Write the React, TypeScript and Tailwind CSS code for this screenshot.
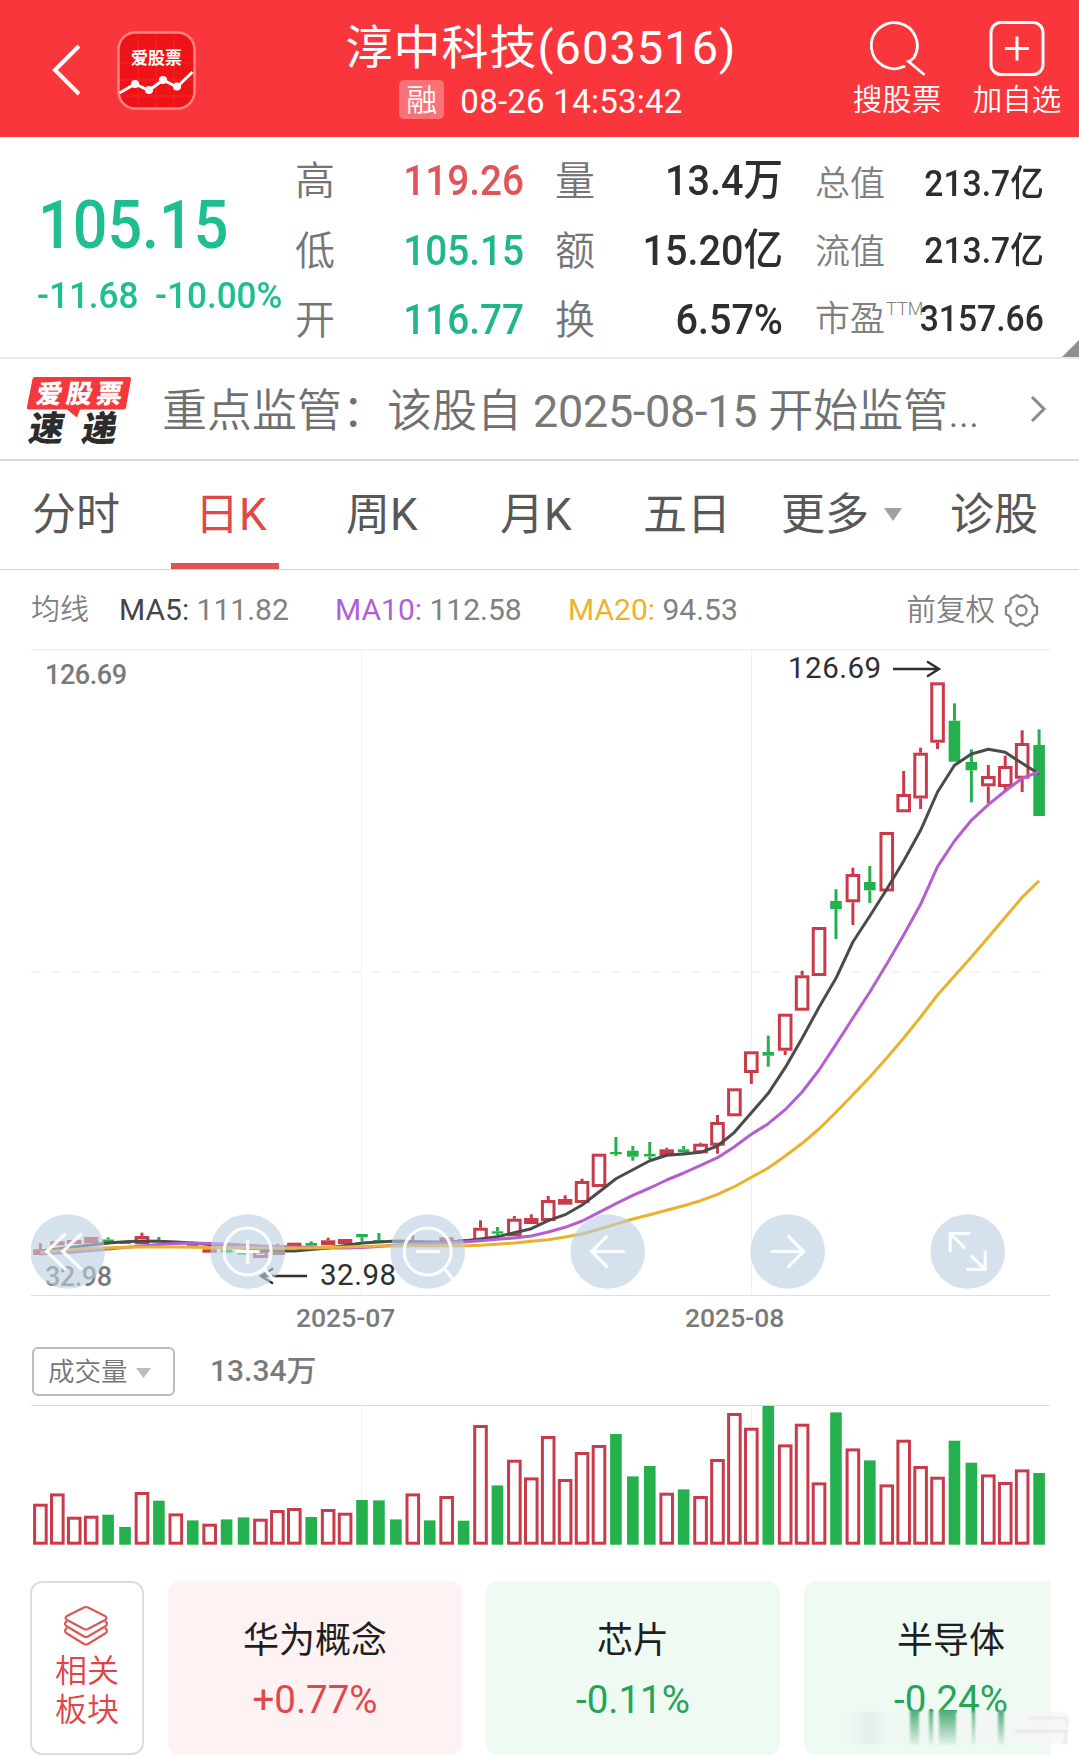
import React from 'react'

const RED = '#c93a4b'
const GREEN = '#24b14d'

const FIRST_X = 40.4
const STEP = 16.927

// [up, high, bodyTop, bodyBottom, low]
type Candle = [number, number, number, number, number]

const candles: Candle[] = [
  [1, 1243.3, 1249.3, 1255, 1255],
  [1, 1241.3, 1241.3, 1245.3, 1245.3],
  [1, 1240, 1240, 1244, 1244],
  [1, 1237, 1237, 1243.3, 1243.3],
  [0, 1237.3, 1239.5, 1243, 1244.5],
  [0, 1242, 1242, 1244, 1244],
  [1, 1232.7, 1236, 1244.3, 1244.3],
  [0, 1237, 1240, 1242, 1242],
  [1, 1241.3, 1241.3, 1243.5, 1243.5],
  [0, 1244, 1244, 1247, 1247],
  [1, 1249.3, 1249.3, 1252.7, 1252.7],
  [0, 1249.5, 1249.5, 1252.7, 1252.7],
  [0, 1252, 1252, 1254.5, 1254.5],
  [1, 1249.3, 1250.5, 1258, 1258],
  [1, 1244, 1249.5, 1255, 1255],
  [1, 1242.7, 1242.7, 1246.5, 1246.5],
  [0, 1241.3, 1243, 1245.7, 1245.7],
  [1, 1237.7, 1240.3, 1245.3, 1245.3],
  [1, 1239, 1239, 1244, 1244],
  [0, 1234, 1234, 1237.3, 1241.3],
  [0, 1233, 1240, 1242, 1242],
  [0, 1241, 1241, 1243, 1243],
  [1, 1235, 1241, 1244.5, 1244.5],
  [0, 1241, 1241, 1243, 1243],
  [1, 1237, 1237.3, 1244, 1244],
  [0, 1239, 1239, 1241, 1241],
  [1, 1220.3, 1227.7, 1241, 1241],
  [0, 1227, 1231.3, 1233.6, 1235.3],
  [1, 1216, 1218.7, 1236.3, 1236.3],
  [1, 1214.3, 1218, 1224, 1224],
  [1, 1196, 1200, 1221, 1221],
  [1, 1195.3, 1199, 1204.7, 1204.7],
  [1, 1178.7, 1181, 1203, 1203],
  [1, 1153.7, 1153.7, 1187, 1187],
  [0, 1137, 1152, 1154.3, 1156],
  [0, 1146, 1150.7, 1156.7, 1160.7],
  [0, 1142, 1154, 1156.5, 1159.3],
  [1, 1147.7, 1149.3, 1156, 1156],
  [0, 1146, 1149.3, 1152.3, 1153.7],
  [1, 1142.7, 1143.7, 1153.3, 1153.3],
  [1, 1115, 1122, 1145.7, 1153.7],
  [1, 1088.3, 1088.3, 1116.3, 1116.3],
  [1, 1051.3, 1051.3, 1073, 1084],
  [0, 1035.7, 1052, 1055.7, 1066.7],
  [1, 1013.7, 1013.7, 1050.7, 1055],
  [1, 970.7, 975.3, 1010.7, 1010.7],
  [1, 927, 927, 976, 976],
  [0, 889.3, 901, 909, 939],
  [1, 867.7, 874, 902.3, 925],
  [0, 866, 882, 890.3, 903],
  [1, 832, 832, 891.5, 891.5],
  [1, 771, 794, 812.3, 812.3],
  [1, 747.7, 752.7, 798.5, 809],
  [1, 682.3, 682.3, 742.7, 749],
  [0, 703.3, 720.7, 761.7, 761.7],
  [0, 749.3, 762, 770.3, 802.3],
  [1, 765, 776, 786.3, 803.3],
  [1, 755.7, 766, 787, 791.7],
  [1, 730.3, 743, 778.7, 792],
  [0, 729.3, 745, 816, 816],
]

const ma5 = [
  1251, 1249, 1247, 1245, 1243, 1241.7, 1241, 1241.3, 1242, 1243, 1244.5, 1246, 1248, 1250, 1251, 1251, 1249.5, 1248,
  1245.5, 1243, 1242, 1241, 1241.5, 1242, 1242, 1241, 1239, 1236.7, 1232.7, 1228.7, 1220.7, 1214.7, 1205, 1192, 1178.7,
  1169.7, 1160.7, 1155.3, 1154, 1152.3, 1146, 1132.3, 1112.7, 1093.3, 1067.7, 1038.3, 1007.3, 978.3, 942, 916, 889.3,
  861, 830.3, 792, 765.3, 754, 749.3, 752.3, 763.3, 774,
]

const ma10 = [
  1254, 1253, 1252, 1250.5, 1249, 1247.5, 1246, 1244.5, 1243.5, 1243, 1243.5, 1244, 1245, 1246, 1246.5, 1247, 1247.5,
  1248, 1248, 1247.5, 1246.5, 1245, 1244, 1243.5, 1243, 1242, 1240.7, 1239.3, 1238, 1236, 1232, 1227.3, 1221, 1212.3,
  1203.7, 1195.3, 1188, 1180, 1173, 1165.3, 1157.7, 1146.7, 1134.3, 1123.7, 1109.7, 1092, 1070, 1044.3, 1018, 992, 964,
  935, 904.3, 866.7, 841, 820.3, 804.7, 791, 778.3, 771.7,
]

const ma20 = [
  1252, 1250.7, 1249.5, 1248.5, 1247.7, 1247.3, 1247, 1247, 1247, 1247.3, 1247.5, 1247.5, 1247.5, 1248, 1248, 1248,
  1248, 1247.5, 1247, 1246.5, 1246, 1246, 1245.7, 1245.7, 1245.7, 1245.7, 1245.3, 1244.3, 1243, 1241.3, 1239.7, 1237,
  1234, 1229.3, 1224, 1219, 1214.7, 1210.3, 1205.7, 1200.7, 1194.3, 1186.7, 1177.3, 1168, 1156, 1143.3, 1129, 1112.3,
  1094.7, 1077, 1058, 1038, 1017, 995, 976, 957, 937.3, 917.3, 897.3, 880.7,
]

// [up, bar height]
const volumes: [number, number][] = [
  [1, 41], [1, 51.3], [1, 28], [1, 29], [0, 30], [0, 17.7], [1, 52.7], [0, 44], [1, 31.3], [0, 24.3],
  [1, 21], [0, 25.3], [0, 27.3], [1, 26], [1, 34.7], [1, 36.7], [0, 27.7], [1, 35.7], [1, 32], [0, 44.7],
  [0, 44.3], [0, 25.3], [1, 51.3], [0, 24.3], [1, 48.7], [0, 24], [1, 119.7], [0, 59.3], [1, 85], [1, 67.3],
  [1, 108.7], [1, 65.7], [1, 92.7], [1, 99.7], [0, 110.7], [0, 68.3], [0, 78.7], [1, 52], [0, 55.3], [1, 48.7],
  [1, 85.7], [1, 131.7], [1, 117], [0, 138.7], [1, 100.3], [1, 121], [1, 62.3], [0, 132.3], [1, 96.3], [0, 84.3],
  [1, 60.3], [1, 105], [1, 78.7], [1, 68], [0, 104], [0, 82], [1, 70.3], [1, 62.7], [1, 75.3], [0, 71.7],
]

const quoteRows = [
  { a: '高', av: '119.26', up: true, b: '量', bv: '13.4万' },
  { a: '低', av: '105.15', up: false, b: '额', bv: '15.20亿' },
  { a: '开', av: '116.77', up: false, b: '换', bv: '6.57%' },
]

const valueRows = [
  { label: '总值', value: '213.7亿' },
  { label: '流值', value: '213.7亿' },
  { label: '市盈', sup: 'TTM', value: '3157.66' },
]

const sectors = [
  { name: '华为概念', change: '+0.77%', up: true },
  { name: '芯片', change: '-0.11%', up: false },
  { name: '半导体', change: '-0.24%', up: false },
]

const linePoints = (values: number[]) => values.map((y, i) => `${FIRST_X + STEP * i},${y}`).join(' ')

const Header: React.FC = () => (
  <header className="flex h-[137px] items-start bg-[#f9363c] text-white">
    <svg className="mt-[42px] ml-[49px]" width="32" height="56" fill="none" stroke="currentColor" strokeWidth="4">
      <path d="M30 4 6 28l24 24" />
    </svg>
    <svg className="mt-[31px] ml-[36px]" width="79" height="79">
      <rect x="1.5" y="1.5" width="76" height="76" rx="17" fill="#ee1316" stroke="#ff8585" strokeWidth="2.5" />
      <path d="M21 3v73M39 3v73M57 3v73M3 32h73M3 49h73M3 65h73" stroke="#ff4a4a" strokeWidth="1" opacity=".35" />
      <text x="39.500" y="32.500" textAnchor="middle" fontSize="17" fontWeight="700" fill="#fff">爱股票</text>
      <path d="M2.500 62 18 53l14 6.500 14-10.500 14 7L75.500 41" fill="none" stroke="#fff" strokeWidth="3" />
      <g fill="#fff">
        <circle cx="18" cy="53" r="4" />
        <circle cx="32" cy="59" r="4" />
        <circle cx="46" cy="49" r="4" />
        <circle cx="60" cy="55.500" r="4" />
      </g>
    </svg>
    <div className="ml-[148px] flex w-[394px] flex-col items-center">
      <h1 className="mt-[18px] text-[47px] leading-[60px] tracking-[1px] whitespace-nowrap">淳中科技(603516)</h1>
      <div className="mt-[2px] flex h-[39px] items-center gap-4">
        <span className="flex h-[39px] w-[45px] items-center justify-center rounded-[5px] bg-white/30 pt-[2px] text-[31px] leading-none font-[350]">融</span>
        <span className="mt-1 text-[33px] leading-none tracking-[.25px] whitespace-nowrap">08-26 14:53:42</span>
      </div>
    </div>
    <div className="ml-[111px] flex w-[96px] flex-col items-center">
      <svg className="mt-[20px] ml-px" width="56" height="56" fill="none" stroke="currentColor" strokeWidth="2.8" strokeLinecap="round">
        <path d="M34 46.500A23 23 0 1 1 44 37.500Q42 40 38.500 41.500L53.500 54" />
      </svg>
      <span className="mt-[9px] text-[29.500px] leading-[30px] font-[350] whitespace-nowrap">搜股票</span>
    </div>
    <div className="ml-[24px] flex w-[96px] flex-col items-center">
      <svg className="mt-[20px]" width="56" height="56" fill="none" stroke="currentColor" strokeWidth="3">
        <rect x="2" y="2.500" width="52" height="52" rx="10" />
        <path d="M28 16.500v24M16 28.500h24" />
      </svg>
      <span className="mt-[9px] text-[29.500px] leading-[30px] font-[350] whitespace-nowrap">加自选</span>
    </div>
  </header>
)

const Quote: React.FC = () => (
  <section className="relative flex h-[222px] border-b-2 border-[#e7e7e7]">
    <div className="w-[295px] text-[#1fbe91]">
      <div className="mt-[51px] ml-[38px] origin-left scale-x-[.925] text-[66px] leading-[76px] font-medium">105.15</div>
      <div className="mt-[12px] ml-[37px] flex w-max origin-left scale-x-[.975] gap-[17px] text-[36px] leading-[40px] font-medium whitespace-nowrap">
        <span>-11.68</span>
        <span>-10.00%</span>
      </div>
    </div>
    <div className="mt-[9px] w-[489px]">
      {quoteRows.map((row) => (
        <div key={row.a} className="flex h-[69.5px] items-center text-[40px] leading-none">
          <span className="w-[40px] pt-[3px] font-[350] text-[#757575]">{row.a}</span>
          <span className={`w-[189px] origin-right scale-x-[.9] text-right text-[43px] font-medium ${row.up ? 'text-[#e05558]' : 'text-[#1fb68b]'}`}>
            {row.av}
          </span>
          <span className="ml-[31px] w-[40px] pt-[3px] font-[350] text-[#757575]">{row.b}</span>
          <span className="w-[188px] origin-right scale-x-[.92] text-right text-[43px] font-medium text-[#2e2e2e]">{row.bv}</span>
        </div>
      ))}
    </div>
    <div className="mt-[13px] ml-[31px] w-[229px]">
      {valueRows.map((row) => (
        <div key={row.label} className="flex h-[67.500px] items-center leading-none">
          <span className="relative pt-[2px] text-[35px] font-[350] text-[#808080]">
            {row.label}
            {row.sup && <span className="absolute top-0 left-[71px] text-[18px] leading-none font-light">{row.sup}</span>}
          </span>
          <span className="ml-auto origin-right scale-x-[.935] text-[36px] font-medium text-[#2e2e2e]">{row.value}</span>
        </div>
      ))}
    </div>
    <svg className="absolute right-0 bottom-0" width="17" height="17">
      <path d="M17 0v17H0z" fill="#8f8f8f" />
    </svg>
  </section>
)

const News: React.FC = () => (
  <section className="flex h-[102px] items-center border-b-2 border-[#d9d9d9]">
    <svg className="mt-px ml-[26px] overflow-visible" width="106" height="70">
      <path d="M9 2h94q2.500 0 2 2.500l-5 28q-.5 2-3 2H54l-3 8-10-8H3q-2.500 0-2-2.500l5.500-28Q7 2 9 2z" fill="#f5383c" />
      <g transform="skewX(-10)" fontWeight="900">
        <text x="14" y="28" fontSize="26" fill="#fff" letterSpacing="4">爱股票</text>
        <text x="13" y="66" fontSize="35" fill="#2c2c2c">速</text>
        <text x="66" y="66" fontSize="35" fill="#2c2c2c">递</text>
      </g>
    </svg>
    <p className="ml-[30px] pt-[4px] text-[45px] leading-none font-[350] whitespace-nowrap text-[#707070]">
      重点监管：该股自 <span className="font-normal tracking-[-.3px] text-[#787878]">2025-08-15</span> 开始监管<span className="tracking-[-.5px]">...</span>
    </p>
    <svg className="ml-auto mr-[32px]" width="18" height="28" fill="none" stroke="#8a8a8a" strokeWidth="3">
      <path d="M3 2l12 12L3 26" />
    </svg>
  </section>
)

const Tabs: React.FC = () => (
  <nav className="flex h-[109px] items-stretch border-b border-[#d4d4d4] text-[44px] leading-[108px] font-[370] whitespace-nowrap text-[#585858]">
    <span className="ml-[32px] w-[139px]">分时</span>
    <span className="relative w-[108px] pl-[24px] text-[#e04848]">
      日K
      <span className="absolute bottom-0 left-0 h-[6px] w-full bg-[#e05353]" />
    </span>
    <span className="ml-[67px] w-[154px]">周K</span>
    <span className="w-[143px]">月K</span>
    <span className="w-[138px]">五日</span>
    <span className="flex w-[169px] items-center">
      更多
      <svg className="mt-[-2px] ml-[15px]" width="18" height="13">
        <path d="M0 0h18l-9 13z" fill="#a0a0a0" />
      </svg>
    </span>
    <span>诊股</span>
  </nav>
)

const Averages: React.FC = () => (
  <div className="mx-[31px] flex h-[79px] items-center pt-px text-[30px] leading-none whitespace-nowrap text-[#808080]">
    <span className="w-[88px] pt-px text-[29px] font-[350]">均线</span>
    <span className="w-[216px]"><span className="text-[#444]">MA5:</span> 111.82</span>
    <span className="w-[233px]"><span className="text-[#b15fd6]">MA10:</span> 112.58</span>
    <span><span className="text-[#eeb22a]">MA20:</span> 94.53</span>
    <span className="ml-auto pt-px text-[29.500px] font-[350]">前复权</span>
    <svg className="mr-[9px] ml-[9px]" width="35" height="35" viewBox="-17.500 -17.500 35 35" fill="none" stroke="#858585" strokeWidth="2.300" strokeLinejoin="round">
      <path d="M15.500 -3.900V3.900Q9.400 5.400 11.100 11.500L4.400 15.400Q0 10.800 -4.400 15.400L-11.100 11.500Q-9.400 5.400 -15.500 3.900V-3.900Q-9.400 -5.400 -11.100 -11.500L-4.400 -15.400Q0 -10.800 4.400 -15.400L11.100 -11.500Q9.400 -5.400 15.500 -3.900Z" />
      <circle r="5" />
    </svg>
  </div>
)

const tools = [
  <path key="l" d="M-2 -18l-19 18 19 18M14 -18L-5 0l19 18" />,
  <g key="in">
    <circle r="23.500" />
    <path d="M-12 0h24M0 -12v24M16.500 17l9 11" />
  </g>,
  <g key="out">
    <circle r="23.500" />
    <path d="M-12 0h24M16.500 17l9 11" />
  </g>,
  <path key="prev" d="M17 0h-33M0 -16L-16 0 0 16" />,
  <path key="next" d="M-17 0h33M0 -16L16 0 0 16" />,
  <path key="full" d="M-17.500 1v-19h20M-17.500 -18l15 15M17.500 -1v19h-19M17.500 18L3 4" />,
]

const PriceChart: React.FC = () => (
  <svg className="mx-[31px] block" width="1019" height="648" viewBox="31 649 1019 648">
    <path d="M31 649.500h1019" stroke="#f0f0f0" strokeWidth="2" />
    <path d="M31 1295.500h1019" stroke="#dedede" />
    <path d="M361.500 650v645M751.500 650v645" stroke="#f1f1f1" />
    <path d="M31 972h1019" stroke="#f1f1f1" strokeDasharray="10 10" strokeWidth="1.500" />

    <g fontSize="27" fill="#7a7a7a" fontWeight="500">
      <text x="45" y="684" textLength="82">126.69</text>
      <text x="45" y="1286" textLength="67">32.98</text>
    </g>

    {candles.map(([up, high, top, bottom, low], i) => {
      const x = FIRST_X + STEP * i
      const color = up ? RED : GREEN
      return (
        <g key={i} stroke={color} strokeWidth="3">
          {high < top && <path d={`M${x} ${high}V${top}`} />}
          {low > bottom && <path d={`M${x} ${bottom}V${low}`} />}
          {up && bottom - top > 7 ? (
            <rect x={x - 5.8} y={top + 1.5} width="11.6" height={bottom - top - 3} fill="#fff" />
          ) : (
            <rect x={up ? x - 7.2 : x - 5.8} y={top} width={up ? 14.4 : 11.6} height={bottom - top} fill={color} stroke="none" />
          )}
        </g>
      )
    })}

    <g fill="none" strokeWidth="3" strokeLinejoin="round">
      <polyline points={linePoints(ma5)} stroke="#4b4b4b" />
      <polyline points={linePoints(ma10)} stroke="#b35fd3" />
      <polyline points={linePoints(ma20)} stroke="#e9b22c" />
    </g>

    <g fontSize="29.5" fill="#2f2f2f" letterSpacing=".5">
      <text x="788" y="678">126.69</text>
      <text x="320" y="1285">32.98</text>
    </g>
    <path d="M893 669h45M927 661.500l12 7.500-12 7.500M307 1276h-45M273 1268.500l-12 7.500 12 7.500" fill="none" stroke="#2f2f2f" strokeWidth="2.400" />

    {tools.map((icon, i) => (
      <g key={i} transform={`translate(${67.7 + 180 * i} 1251.500)`}>
        <circle r="37.300" fill="#bbcfe1" fillOpacity=".62" />
        <g fill="none" stroke="#fff" strokeWidth="3.200" opacity=".9">{icon}</g>
      </g>
    ))}
  </svg>
)

const VolumeChart: React.FC = () => (
  <svg className="mx-[31px] block" width="1019" height="141" viewBox="31 0 1019 141">
    <path d="M31 .5h1019" stroke="#dcdcdc" />
    <path d="M361.500 1v139M751.500 1v139" stroke="#f1f1f1" />
    {volumes.map(([up, h], i) => {
      const x = FIRST_X + STEP * i
      return up ? (
        <rect key={i} x={x - 5.8} y={139.700 - h + 1.5} width="11.600" height={h - 3} fill="#fff" stroke={RED} strokeWidth="3" />
      ) : (
        <rect key={i} x={x - 5.8} y={139.700 - h} width="11.600" height={h} fill={GREEN} />
      )
    })}
  </svg>
)

const Sectors: React.FC = () => (
  <section className="mt-[35px] mr-[29px] ml-[30px] flex h-[174px] overflow-hidden">
    <div className="mr-[24px] flex w-[114px] shrink-0 flex-col items-center rounded-xl border-2 border-[#dcdcdc] text-[32px] leading-[39px] font-[350] text-[#e04545]">
      <svg className="mt-[22px] mr-[2px] mb-[5px]" width="46" height="42" fill="none" stroke="#d85a58" strokeWidth="2.200" strokeLinejoin="round">
        <path d="M21 2.500q2-1 4 0L42 11q3 2 0 4L25 24q-2 1-4 0L4 15q-3-2 0-4z" />
        <path d="M4 16q-4 2.500 0 5.500l17 10q2 1 4 0l17-10q4-3 0-5.500M4 23q-4 2.500 0 5.500L21 39q2 1 4 0l17-10.500q4-3 0-5.500" />
      </svg>
      <span>相关</span>
      <span>板块</span>
    </div>
    {sectors.map((s) => (
      <div key={s.name} className={`mr-[24px] flex w-[294px] shrink-0 flex-col items-center rounded-xl leading-none ${s.up ? 'bg-[#fef2f2]' : 'bg-[#eefaf2]'}`}>
        <span className="mt-[40px] text-[36px] leading-[40px] font-[370] text-[#1f1f1f]">{s.name}</span>
        <span className={`mt-[19px] text-[38.500px] leading-[40px] ${s.up ? 'text-[#e0494c]' : 'text-[#27a458]'}`}>{s.change}</span>
      </div>
    ))}
  </section>
)

const Smear: React.FC = () => (
  <svg className="absolute top-[1709px] left-[835px]" width="240" height="40">
    <defs>
      <linearGradient id="drip" x1="0" y1="0" x2="0" y2="1">
        <stop offset="0" stopColor="#4fae78" />
        <stop offset="1" stopColor="#4fae78" stopOpacity=".08" />
      </linearGradient>
      <linearGradient id="haze" x1="0" y1="0" x2="1" y2="0">
        <stop offset="0" stopColor="#f3f8f4" stopOpacity="0" />
        <stop offset=".12" stopColor="#e2eae4" />
        <stop offset=".2" stopColor="#f0f8f3" />
        <stop offset="1" stopColor="#f7f7f7" />
      </linearGradient>
      <filter id="soft"><feGaussianBlur stdDeviation="1" /></filter>
    </defs>
    <rect x="5" y="3" width="227" height="32" fill="url(#haze)" opacity=".8" filter="url(#soft)" />
    <g fill="url(#drip)" filter="url(#soft)">
      <rect x="75" y="2" width="9" height="34" />
      <rect x="94" y="2" width="4" height="34" />
      <rect x="104" y="2" width="17" height="34" />
      <rect x="137" y="2" width="3" height="34" />
      <rect x="163" y="2" width="6" height="34" />
    </g>
    <path d="M195 9h37v9M180 22h54M231 22v12h-4" fill="none" stroke="#c4c4c4" strokeWidth="1.200" opacity=".7" filter="url(#soft)" />
  </svg>
)

const App: React.FC = () => {
  return (
    <main className="relative h-[1755px] w-[1079px] overflow-hidden bg-white font-['Roboto','Noto_Sans_CJK_SC',sans-serif]">
      <Header />
      <Quote />
      <News />
      <Tabs />
      <Averages />
      <PriceChart />
      <div className="flex h-[42px] items-center pt-px pl-[296px] text-[26.500px] leading-none font-medium text-[#7a7a7a]">
        <span className="w-[389px]">2025-07</span>
        <span>2025-08</span>
      </div>
      <div className="mt-[8px] mb-[9px] flex h-[49px] items-center pl-[32px] leading-none">
        <div className="flex h-[49px] w-[143px] items-center rounded-md border-2 border-[#bcbcbc] pt-[2px] pl-[14px] text-[26.500px] font-[350] text-[#757575]">
          成交量
          <svg className="ml-[8px]" width="15" height="10">
            <path d="M0 0h15l-7.500 10z" fill="#bcbcbc" />
          </svg>
        </div>
        <span className="ml-[35px] pb-[2px] text-[30px] font-medium text-[#7a7a7a]">13.34万</span>
      </div>
      <VolumeChart />
      <Sectors />
      <Smear />
    </main>
  )
}

export default App
